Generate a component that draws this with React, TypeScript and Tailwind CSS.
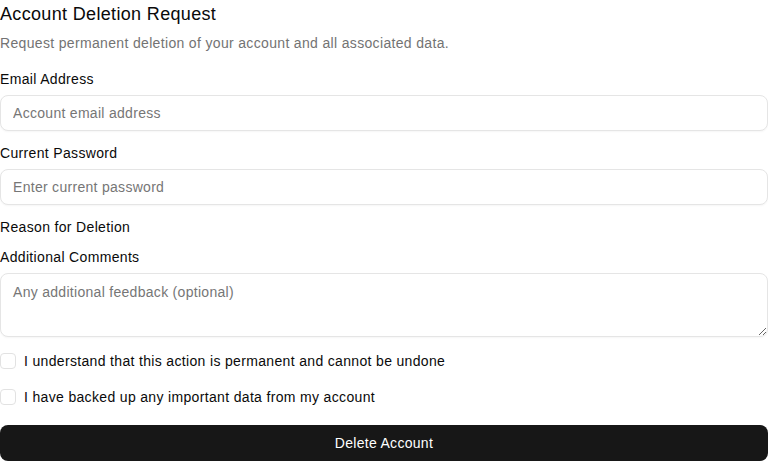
import { useState } from 'react';

function Field({ label, children }: { label: string; children?: React.ReactNode }) {
  return (
    <div className="flex flex-col">
      <label className="text-sm leading-5 text-[#0a0a0a]">{label}</label>
      {children && <div className="mt-1.5">{children}</div>}
    </div>
  );
}

function Check({ label }: { label: string }) {
  const [checked, setChecked] = useState(false);
  return (
    <label className="flex h-5 items-center gap-2 text-sm text-[#0a0a0a]">
      <input
        type="checkbox"
        checked={checked}
        onChange={(e) => setChecked(e.target.checked)}
        className="h-4 w-4 shrink-0 appearance-none rounded-[4px] border border-[#e2e2e2] bg-white checked:bg-[#171717]"
      />
      <span>{label}</span>
    </label>
  );
}

export default function App() {
  const inputCls =
    'h-9 w-full rounded-lg border border-[#e5e5e5] bg-white px-3 text-sm tracking-[0.021em] text-[#0a0a0a] shadow-[0_1px_2px_rgba(0,0,0,0.04)] outline-none placeholder:text-[#767676]';

  return (
    <div className="w-[768px] bg-white font-['Liberation_Sans',Arial,sans-serif] tracking-[0.021em]">
      <h2 className="text-lg leading-7 font-normal text-[#0a0a0a]">Account Deletion Request</h2>
      <p className="mt-[5px] text-sm leading-5 text-[#737373]">
        Request permanent deletion of your account and all associated data.
      </p>

      <div className="mt-4">
        <Field label="Email Address">
          <input type="email" placeholder="Account email address" className={inputCls} />
        </Field>
      </div>

      <div className="mt-3">
        <Field label="Current Password">
          <input type="password" placeholder="Enter current password" className={inputCls} />
        </Field>
      </div>

      <div className="mt-3">
        <Field label="Reason for Deletion" />
      </div>

      <div className="mt-2.5">
        <Field label="Additional Comments">
          <textarea
            placeholder="Any additional feedback (optional)"
            className="block h-16 w-full rounded-lg border border-[#e5e5e5] bg-white px-3 py-2 text-sm tracking-[0.021em] text-[#0a0a0a] shadow-[0_1px_2px_rgba(0,0,0,0.04)] outline-none placeholder:text-[#767676]"
          />
        </Field>
      </div>

      <div className="mt-[14px] flex flex-col gap-4">
        <Check label="I understand that this action is permanent and cannot be undone" />
        <Check label="I have backed up any important data from my account" />
      </div>

      <button
        type="button"
        className="mt-[18px] flex h-9 w-full items-center justify-center rounded-lg bg-[#171717] text-sm tracking-[0.021em] text-white"
      >
        Delete Account
      </button>
    </div>
  );
}
